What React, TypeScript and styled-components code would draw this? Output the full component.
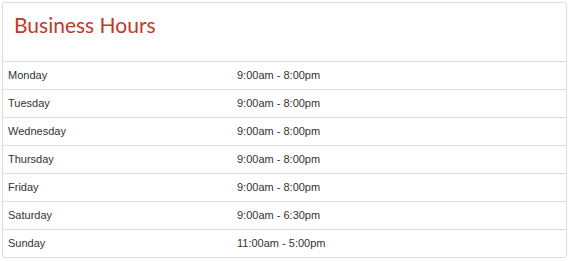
import React from "react";
import styled, { createGlobalStyle } from "styled-components";

const Global = createGlobalStyle`
  html, body { margin: 0; padding: 0; background: #ffffff; }
  body { font-family: "Liberation Sans", Arial, sans-serif; }
`;

const Page = styled.div`
  padding: 2px 3px 0 2px;
`;

const Panel = styled.section`
  border: 1px solid #dddddd;
  border-radius: 3px;
  background: #ffffff;
  overflow: hidden;
  box-shadow: 0 1px 1px rgba(0, 0, 0, 0.04);
`;

const Header = styled.header`
  height: 58px;
  box-sizing: border-box;
  padding: 9px 0 0 11px;
`;

const Title = styled.h2`
  margin: 0;
  font-family: Lato, "Open Sans", sans-serif;
  font-weight: 400;
  font-size: 21px;
  line-height: 26px;
  color: #c0392b;
`;

const Row = styled.div`
  display: grid;
  grid-template-columns: 229px 1fr;
  height: 28px;
  box-sizing: border-box;
  border-top: 1px solid #dddddd;
  align-items: center;
`;

const Cell = styled.div`
  padding: 0 5px;
  font-size: 11px;
  color: #333333;
  line-height: 27px;
`;

const hours: [string, string][] = [
  ["Monday", "9:00am - 8:00pm"],
  ["Tuesday", "9:00am - 8:00pm"],
  ["Wednesday", "9:00am - 8:00pm"],
  ["Thursday", "9:00am - 8:00pm"],
  ["Friday", "9:00am - 8:00pm"],
  ["Saturday", "9:00am - 6:30pm"],
  ["Sunday", "11:00am - 5:00pm"],
];

export default function App() {
  return (
    <>
      <Global />
      <Page>
        <Panel>
          <Header>
            <Title>Business Hours</Title>
          </Header>
          {hours.map(([day, time]) => (
            <Row key={day}>
              <Cell>{day}</Cell>
              <Cell>{time}</Cell>
            </Row>
          ))}
        </Panel>
      </Page>
    </>
  );
}
